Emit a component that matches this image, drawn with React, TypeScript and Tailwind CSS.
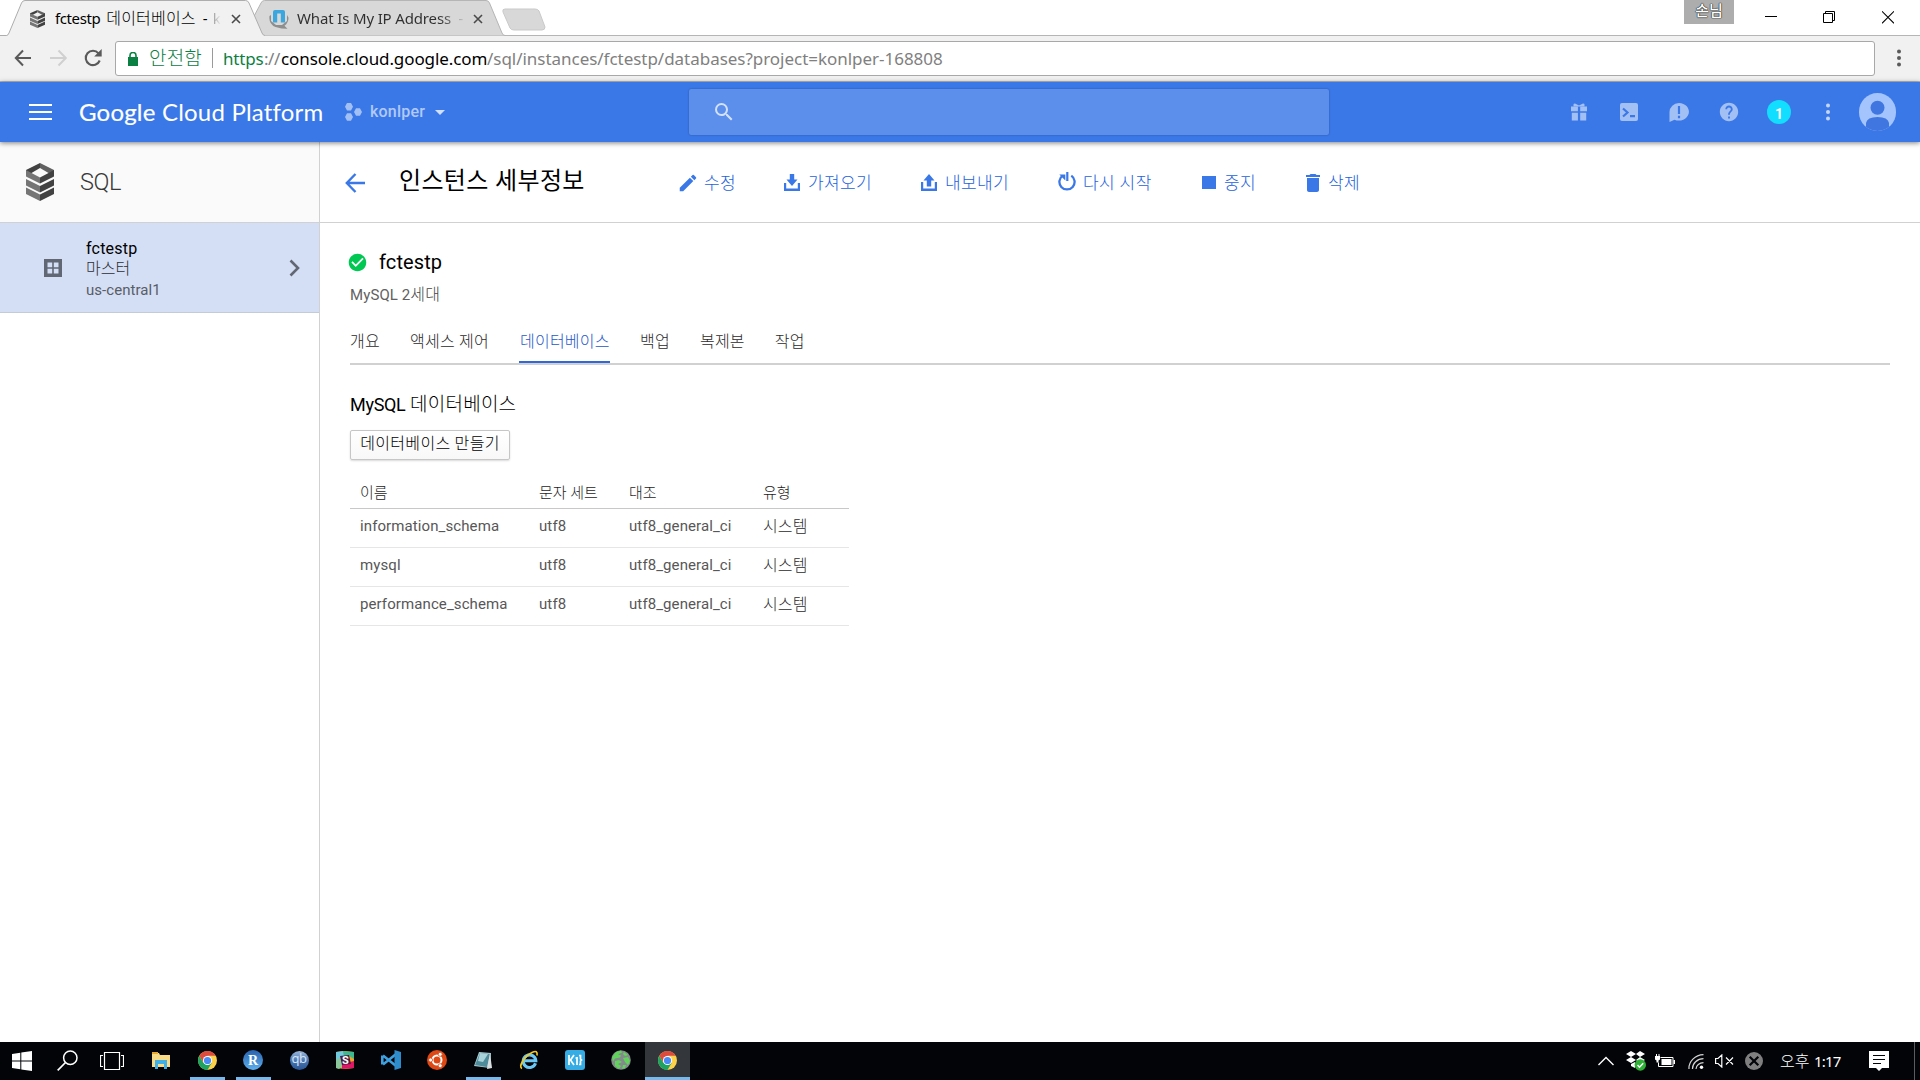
import React from "react";
import {
  MdCheckCircle,
  MdDelete,
  MdEdit,
  MdHelp,
  MdSearch,
} from "react-icons/md";

function SqlLogo({ className }: { className: string }) {
  return (
    <svg viewBox="0 0 28 38" className={className} preserveAspectRatio="none">
      <path d="M14 0 0 7v3l5.5 0L14 5z" fill="#424242" />
      <path d="M14 0l14 7v3h-5.500L14 5z" fill="#616161" />
      <path d="M0 7v6.500l14 7v-6L5.500 10z" fill="#757575" />
      <path d="M28 7v6.500l-14 7v-6l8.500-4.500z" fill="#424242" />
      <path d="M0 16l14 7v6.500L0 22.500z" fill="#757575" />
      <path d="M28 16l-14 7v6.500l14-7z" fill="#424242" />
      <path d="M0 24.500l14 7V38L0 31z" fill="#757575" />
      <path d="M28 24.500l-14 7V38l14-7z" fill="#424242" />
    </svg>
  );
}

function CloseGlyph({ className }: { className: string }) {
  return (
    <svg viewBox="0 0 10 10" className={className}>
      <path d="M1 1l8 8M9 1L1 9" stroke="#4a4a4a" strokeWidth="1.600" />
    </svg>
  );
}

function TabStrip() {
  return (
    <div className="relative flex h-[36px] w-full items-start border-b border-[#b5b5b5] bg-white">
      <div className="relative z-10 -mb-px flex h-[36px] w-[257px] shrink-0 items-center pl-[30px]">
        <svg className="absolute top-0 left-0 -z-10 h-[36px] w-[266px]" viewBox="0 0 266 36">
          <path d="M0 35.500H6.500Q8 35.500 9 33L21.500 3Q22.500.5 25 .5H245.500Q248 .5 249 3L262 33Q263 35.500 265 35.500V36H0z" fill="#f1f1f1" />
          <path d="M0 35.500H6.500Q8 35.500 9 33L21.500 3Q22.500.5 25 .5H245.500Q248 .5 249 3L262 33Q263 35.500 265 35.500" fill="none" stroke="#adadad" />
        </svg>
        <SqlLogo className="mt-[2px] h-[18px] w-[15px]" />
        <div className="ml-[10px] w-[168px] overflow-hidden text-[15px] leading-[38px] whitespace-nowrap text-black">
          <span className="tracking-[-0.4px]">fctestp</span>
          <span className="ml-[6px] text-[16px] font-light tracking-[0.2px]">데이터베이스</span>
          <span className="ml-[7px]">-</span>
          <span className="ml-[5px] bg-gradient-to-r from-[#999] to-[#f1f1f1] bg-clip-text text-transparent">k</span>
        </div>
        <CloseGlyph className="mt-[2px] ml-[8px] h-[10px] w-[10px]" />
      </div>
      <div className="relative flex h-[35px] w-[245px] shrink-0 items-center pl-[12px]">
        <svg className="absolute top-0 left-[-20px] h-[36px] w-[270px]" viewBox="0 0 270 36">
          <path d="M15 36V20L24 3Q25 .5 27.500 .5H249Q251.500 .5 252.500 3L265 33Q266 35.500 268 35.500V36z" fill="#d8d8d8" stroke="#b5b5b5" />
        </svg>
        <svg className="relative mt-[3px] h-[20px] w-[20px]" viewBox="0 0 20 20">
          <path d="M.5 7q-1 8 6 11l6 1.500 6 .2-3-3q4-3 4-8L18 6v6l-5 4H7l-5-4V6z" fill="#8e8e8e" />
          <path d="M4 13.500V3q0-2 2-2h8q2 0 2 2v10.500h-4.200V4.500H8.200v9z" fill="#3ba7de" />
        </svg>
        <div className="relative ml-[8px] w-[167px] overflow-hidden bg-gradient-to-r from-[#2f2f2f] from-85% to-[#c8c8c8] bg-clip-text text-[15px] leading-[38px] tracking-[-0.15px] whitespace-nowrap text-transparent">
          What Is My IP Address&nbsp; -
        </div>
        <CloseGlyph className="relative mt-[2px] ml-[9px] h-[10px] w-[10px]" />
      </div>
      <svg className="mt-[8px] h-[23px] w-[44px] shrink-0" viewBox="0 0 44 23">
        <path d="M3 1h30q3 0 4 2l6 16q0 3-3 3H12q-3 0-4-2L1 4q-1-3 2-3z" fill="#d8d8d8" stroke="#c9c9c9" />
      </svg>
      <div className="ml-auto flex items-start">
        <div className="h-[24px] w-[50px] bg-[#adadad] text-center text-[15px] leading-[20px] font-medium text-white [text-shadow:0_0_1px_#222,0_0_1px_#222,0_0_1px_#222]">
          손님
        </div>
        <svg className="ml-[31px] h-[35px] w-[12px]" viewBox="0 0 12 35">
          <path d="M0 16.500h12" stroke="#000" />
        </svg>
        <svg className="ml-[46px] h-[35px] w-[12px]" viewBox="0 0 12 35">
          <path d="M.5 13.500h9v9h-9zM2.500 13v-1.500h9v9H10" fill="none" stroke="#000" />
        </svg>
        <svg className="mr-[26px] ml-[47px] h-[35px] w-[12px]" viewBox="0 0 12 35">
          <path d="M0 11.300l12 12M12 11.300l-12 12" stroke="#000" strokeWidth="1.100" />
        </svg>
      </div>
    </div>
  );
}

function AddressBar() {
  return (
    <div className="flex h-[46px] w-full items-center border-b border-[#b9b9b9] bg-[#f1f1f1] pb-[1px]">
      <svg className="ml-[14px] h-[18px] w-[18px]" viewBox="0 0 18 18">
        <path d="M17 9H2M9 1.500L1.800 9 9 16.500" fill="none" stroke="#5a5a5a" strokeWidth="2" />
      </svg>
      <svg className="ml-[18px] h-[18px] w-[18px]" viewBox="0 0 18 18">
        <path d="M0 9h15.500M8.500 1.500L15.800 9l-7.300 7.500" fill="none" stroke="#d0d0d0" strokeWidth="2" />
      </svg>
      <svg className="ml-[16px] h-[18px] w-[18px]" viewBox="0 0 18 18">
        <path d="M15.700 11.500A7.200 7.200 0 1 1 14.500 4.300" fill="none" stroke="#5a5a5a" strokeWidth="2.100" />
        <path d="M17.700 0v7.500H10.200z" fill="#5a5a5a" />
      </svg>
      <div className="ml-[13px] flex h-[35px] w-[1760px] items-center rounded-[3px] border border-[#a8a8a8] bg-white text-[17px] leading-[33px] whitespace-nowrap">
        <svg className="mt-[2px] ml-[12px] h-[14px] w-[10px]" viewBox="0 0 10 14">
          <path d="M0 5h10v9H0z" fill="#0b8043" />
          <path d="M2 6V3.500a3 3 0 0 1 6 0V6" fill="none" stroke="#0b8043" strokeWidth="1.600" />
        </svg>
        <span className="ml-[11px] w-[54px] text-[19px] font-light tracking-[0.2px] text-[#0b8043]">안전함</span>
        <span className="ml-[9px] h-[20px] w-px bg-[#9a9a9a]" />
        <span className="ml-[10px] w-[41px] pt-[1px] tracking-[-0.2px] text-[#0b8043]">https</span>
        <span className="w-[17px] pt-[1px] tracking-[-0.5px] text-[#808080]">://</span>
        <span className="w-[206px] pt-[1px] tracking-[-0.1px] text-black">console.cloud.google.com</span>
        <span className="pt-[1px] tracking-[-0.03px] text-[#808080]">/sql/instances/fctestp/databases?project=konlper-168808</span>
      </div>
      <svg className="ml-[22px] h-[18px] w-[4px]" viewBox="0 0 4 18">
        <g fill="#5a5a5a">
          <circle cx="2" cy="2.500" r="2" />
          <circle cx="2" cy="9" r="2" />
          <circle cx="2" cy="15.500" r="2" />
        </g>
      </svg>
    </div>
  );
}

function PlatformHeader() {
  return (
    <header className="relative z-20 flex h-[60px] w-full items-center bg-[#3b78e7] pl-[29px] shadow-[0_1px_5px_rgba(0,0,0,0.5)]">
      <div className="flex w-[23px] flex-col gap-[5px]">
        <span className="h-[2px] bg-white" />
        <span className="h-[2px] bg-white" />
        <span className="h-[2px] bg-white" />
      </div>
      <div className="ml-[27px] w-[245px] font-['Lato'] text-[24px] leading-[60px] tracking-[0.2px] whitespace-nowrap text-white">
        <span className="[-webkit-text-stroke:0.2px_white]">Google</span> Cloud Platform
      </div>
      <svg className="ml-[21px] h-[18px] w-[17px]" viewBox="0 0 17 18">
        <g fill="#a3c0f5">
          <path d="M2 0h4l2 3.700-2 3.700H2L0 3.700z" />
          <path d="M2 10.300h4l2 3.700-2 3.700H2L0 14z" />
          <path d="M11 5.300h4l2 3.700-2 3.700h-4L9 9z" />
        </g>
      </svg>
      <div className="ml-[8px] w-[56px] text-[16px] leading-[58px] font-medium tracking-[0.2px] text-[#b1c9f8] font-[Roboto]">konlper</div>
      <svg className="mt-[1px] ml-[9px] h-[5px] w-[10px]" viewBox="0 0 10 5">
        <path d="M0 0h10L5 5z" fill="#d0dffb" />
      </svg>
      <div className="ml-[244px] flex h-[46px] w-[640px] items-center rounded-[2px] bg-[#5c8fec] pl-[23px] shadow-[0_0_2px_rgba(0,0,0,0.35)]">
        <MdSearch className="h-[24px] w-[24px] text-[#d3e1fb]" />
      </div>
      <div className="ml-auto flex items-center pr-[24px]">
        <svg className="h-[18px] w-[16px]" viewBox="0 0 16 18">
          <path d="M0 3.500h16v4.800H9.200V3.500H6.900v4.800H0zM.8 9.800h6.100V17.500H.8zM9.200 9.800h6v7.700h-6z" fill="#a3c0f5" />
          <path d="M2.500 1.600q0-1 1.500-1l4 2 4-2q1.500 0 1.500 1V3.500h-11z" fill="#a3c0f5" />
        </svg>
        <svg className="ml-[33px] h-[18px] w-[18px]" viewBox="0 0 18 18">
          <rect width="18" height="18" rx="2" fill="#a3c0f5" />
          <path d="M3 5.500l4.500 4-4.500 4M10 13.200h5" fill="none" stroke="#3b78e7" strokeWidth="2.200" />
        </svg>
        <svg className="mt-[1px] ml-[31px] h-[19px] w-[20px]" viewBox="0 0 20 19">
          <path d="M10 0a10 8.800 0 1 1-4.500 16.700L.5 19V9A9.500 9 0 0 1 10 0z" fill="#a3c0f5" />
          <path d="M10 3v8M10 12.800v2.400" stroke="#3b78e7" strokeWidth="2.200" />
        </svg>
        <MdHelp className="ml-[29px] h-[22px] w-[22px] text-[#a3c0f5]" />
        <div className="ml-[27px] flex h-[24px] w-[24px] items-center justify-center rounded-full bg-[#12deff] pt-[3px] text-[14px] leading-none font-bold text-white font-[Roboto]">
          1
        </div>
        <svg className="ml-[35px] h-[18px] w-[4px]" viewBox="0 0 4 18">
          <g fill="#c4d7fa">
            <circle cx="2" cy="2.500" r="2" />
            <circle cx="2" cy="9" r="2" />
            <circle cx="2" cy="15.500" r="2" />
          </g>
        </svg>
        <svg className="ml-[29px] h-[38px] w-[37px] rounded-full" viewBox="0 0 37 38">
          <rect width="37" height="38" fill="#a3c4fd" />
          <circle cx="18.500" cy="14.700" r="7" fill="#4076e0" />
          <path d="M7 38v-8q1-6 11.500-6T30 30v8z" fill="#4076e0" />
        </svg>
      </div>
    </header>
  );
}

function Sidebar() {
  return (
    <aside className="flex w-[320px] shrink-0 flex-col border-r border-[#d1d1d1] bg-white">
      <div className="flex h-[81px] items-center border-b border-[#d1d1d1] bg-[#fafafa] pl-[26px]">
        <SqlLogo className="h-[38px] w-[28px]" />
        <span className="ml-[26px] text-[23.500px] leading-[80px] font-light tracking-[-0.4px] text-[#383838]">SQL</span>
      </div>
      <div className="flex h-[90px] items-center border-b border-[#c3cbd9] bg-[#d4dff5] pl-[44px]">
        <svg className="h-[18px] w-[18px]" viewBox="0 0 18 18">
          <path d="M0 0h18v18H0z" fill="#616773" />
          <path d="M3.500 3.500h4.700v4.700H3.500zM9.800 3.500h4.700v4.700H9.800zM3.500 9.800h4.700v4.700H3.500zM9.800 9.800h4.700v4.700H9.800z" fill="#d4dff5" />
        </svg>
        <div className="ml-[24px] w-[180px] pt-[4px] whitespace-nowrap">
          <div className="text-[16px] leading-[20px] tracking-[0.2px] text-black">fctestp</div>
          <div className="text-[16px] leading-[19px] font-light text-[#2b2e34]">마스터</div>
          <div className="mt-[1px] text-[15px] leading-[22px] tracking-[0.05px] text-[#595d66]">us-central1</div>
        </div>
        <svg className="ml-[23px] h-[18px] w-[11px]" viewBox="0 0 11 18">
          <path d="M1.500 1.500L9 9l-7.500 7.500" fill="none" stroke="#616773" strokeWidth="2.600" />
        </svg>
      </div>
    </aside>
  );
}

function ImportIcon() {
  return (
    <svg className="h-[17px] w-[16px]" viewBox="0 0 16 17">
      <path d="M0 9h2.200v5.500h11.600V9H16v8H0z" fill="#3b78e7" />
      <path d="M5.800 0h4.400v5.500H13.500L8 12 2.500 5.500h3.300z" fill="#3b78e7" />
    </svg>
  );
}

function ExportIcon() {
  return (
    <svg className="h-[17px] w-[16px]" viewBox="0 0 16 17">
      <path d="M0 8h2.200v6.500h11.600V8H16v9H0z" fill="#3b78e7" />
      <path d="M5.800 12.500h4.400V6.500H13.500L8 0 2.500 6.500h3.300z" fill="#3b78e7" />
    </svg>
  );
}

function RestartIcon() {
  return (
    <svg className="mb-[2px] h-[19px] w-[18px]" viewBox="0 0 18 19">
      <path d="M13.300 3.600A7.600 7.600 0 1 1 4.700 3.600" fill="none" stroke="#3b78e7" strokeWidth="2.300" />
      <path d="M9.300 0v9" stroke="#3b78e7" strokeWidth="2.200" />
      <path d="M1.300 2.500h6v6z" fill="#3b78e7" />
    </svg>
  );
}

const actions = [
  { label: "수정", box: "w-[105px]", slot: "w-[25px]", icon: <MdEdit className="-ml-[2px] h-[22px] w-[22px]" /> },
  { label: "가져오기", box: "w-[137px]", slot: "w-[24px]", icon: <ImportIcon /> },
  { label: "내보내기", box: "w-[137px]", slot: "w-[24px]", icon: <ExportIcon /> },
  { label: "다시 시작", box: "w-[144px]", slot: "w-[25px]", icon: <RestartIcon /> },
  { label: "중지", box: "w-[104px]", slot: "w-[22px]", icon: <span className="block h-[13px] w-[14px] bg-[#3b78e7]" /> },
  { label: "삭제", box: "w-[70px]", slot: "w-[22px]", icon: <MdDelete className="-ml-[5px] h-[24px] w-[24px]" /> },
];

function Toolbar() {
  return (
    <div className="flex h-[81px] items-center border-b border-[#d1d1d1] pt-[1px] pl-[25px]">
      <svg className="h-[20px] w-[20px]" viewBox="0 0 20 20">
        <path d="M20 10H2M10.500 1L1.800 10l8.700 9" fill="none" stroke="#3b78e7" strokeWidth="2.400" />
      </svg>
      <h1 className="ml-[34px] w-[280px] pb-[3px] text-[24px] leading-[76px] tracking-[0.35px] whitespace-nowrap text-black">인스턴스 세부정보</h1>
      {actions.map((a) => (
        <button key={a.label} className={`flex items-center text-[#3b78e7] ${a.box}`}>
          <span className={`flex shrink-0 ${a.slot}`}>{a.icon}</span>
          <span className="text-[17px] leading-[24px] font-light tracking-[0.4px] whitespace-nowrap text-[#2362dc]">{a.label}</span>
        </button>
      ))}
    </div>
  );
}

const tabs = ["개요", "액세스 제어", "데이터베이스", "백업", "복제본", "작업"];

const rows = ["information_schema", "mysql", "performance_schema"];

function Content() {
  return (
    <div className="pr-[30px] pl-[30px]">
      <div className="mt-[25px] flex h-[28px] items-center">
        <MdCheckCircle className="-ml-[3px] h-[21px] w-[21px] text-[#00c853]" />
        <h2 className="ml-[11px] text-[20px] leading-[28px] tracking-[0.1px] text-black">fctestp</h2>
      </div>
      <div className="mt-[8px] text-[15px] leading-[22px] tracking-[0.1px] text-[#616161]">
        MySQL 2<span className="text-[16px] font-light text-[#444]">세대</span>
      </div>
      <nav className="mt-[23px] flex h-[36px] gap-[30px] border-b-2 border-[#d1d1d1] text-[16px] leading-[26px] font-light tracking-[0.25px] whitespace-nowrap">
        {tabs.map((t) =>
          t === "데이터베이스" ? (
            <span key={t} className="h-[34px] w-[91px] border-b-2 border-[#3367d6] pl-px text-[#2457cc]">
              {t}
            </span>
          ) : (
            <span key={t} className="text-[#2b2b2b]">
              {t}
            </span>
          ),
        )}
      </nav>
      <h3 className="mt-[26px] text-[18px] leading-[28px] text-black">
        <span className="tracking-[-0.3px]">MySQL</span> <span className="text-[19px] font-light tracking-[0.25px]">데이터베이스</span>
      </h3>
      <button className="mt-[11px] flex h-[30px] w-[160px] justify-center rounded-[2px] border border-[#c6c6c6] bg-gradient-to-b from-white to-[#f8f8f8] text-[16px] leading-[25px] font-light tracking-[0.3px] whitespace-nowrap text-black shadow-[0_1px_2px_rgba(0,0,0,0.15)]">
        데이터베이스 만들기
      </button>
      <table className="mt-[19px] w-[499px] table-fixed border-collapse text-left text-[15px] text-[#575757]">
        <colgroup>
          <col className="w-[179px]" />
          <col className="w-[90px]" />
          <col className="w-[134px]" />
          <col className="w-[96px]" />
        </colgroup>
        <thead>
          <tr className="h-[29px] border-b border-[#c8c8c8] leading-[28px]">
            {["이름", "문자 세트", "대조", "유형"].map((h) => (
              <th key={h} className="p-0 pl-[10px] font-light text-[#1c1c1c]">
                {h}
              </th>
            ))}
          </tr>
        </thead>
        <tbody>
          {rows.map((r) => (
            <tr key={r} className="h-[39px] border-b border-[#e6e6e6] leading-[35px] tracking-[0.1px]">
              <td className="p-0 pb-[2px] pl-[10px]">{r}</td>
              <td className="p-0 pb-[2px] pl-[10px]">utf8</td>
              <td className="p-0 pb-[2px] pl-[10px]">utf8_general_ci</td>
              <td className="p-0 pb-[3px] pl-[10px] text-[16px] font-light text-[#2b2b2b]">시스템</td>
            </tr>
          ))}
        </tbody>
      </table>
    </div>
  );
}

function ChromeIcon() {
  return (
    <svg className="h-[19px] w-[19px]" viewBox="0 0 20 20">
      <circle cx="10" cy="10" r="10" fill="#fdd14a" />
      <path d="M1.340 5A10 10 0 0 1 18.660 5H10L5.670 12.500z" fill="#dd4b3e" />
      <path d="M1.340 5A10 10 0 0 0 10 20L14.330 12.500H5.670z" fill="#1da462" />
      <circle cx="10" cy="10" r="4.800" fill="#fff" />
      <circle cx="10" cy="10" r="3.800" fill="#4a8af4" />
    </svg>
  );
}

const apps: { name: string; open?: boolean; icon: React.ReactNode }[] = [
  { name: "chrome", open: true, icon: <ChromeIcon /> },
  {
    name: "r",
    open: true,
    icon: (
      <span className="flex h-[20px] w-[20px] items-center justify-center rounded-full bg-gradient-to-b from-[#2a62ad] to-[#5fb0ee] font-['Liberation_Serif'] text-[14px] font-bold text-white">R</span>
    ),
  },
  {
    name: "qb",
    icon: (
      <span className="flex h-[19px] w-[19px] items-center justify-center rounded-full bg-gradient-to-b from-[#9db8d8] via-[#4a78b5] to-[#2a5593] pb-[3px] text-[13px] tracking-[-0.5px] text-[#d5e2f2]">qb</span>
    ),
  },
  {
    name: "slack",
    icon: (
      <svg className="h-[18px] w-[18px]" viewBox="0 0 18 18">
        <path d="M0 1l9-1 9 1v16l-9 1-9-1z" fill="#e9a820" />
        <path d="M0 1l7-1 2 6-9 3z" fill="#70c9dc" />
        <path d="M7 0l11 1v7l-5-3-5 1z" fill="#3eb890" />
        <path d="M0 9l5-2 3 7-5 4-3-1z" fill="#8ac89b" />
        <path d="M6 13l12-3v7l-12 1z" fill="#e01765" />
        <path d="M4 5l9-1 2 9-9 1z" fill="#4d1b45" />
        <text x="9.500" y="13" textAnchor="middle" fontSize="11" fontWeight="700" fill="#fff" fontFamily="Roboto">S</text>
      </svg>
    ),
  },
  {
    name: "vscode",
    icon: (
      <svg className="h-[20px] w-[20px]" viewBox="0 0 20 20">
        <path d="M2 5.500L14.500 15.500M2 14.500L14.500 4.500M1.300 5.500v9" stroke="#3fa0e0" strokeWidth="2.600" fill="none" />
        <path d="M13.500 0v20L20 18V2z" fill="#2f8ccc" />
      </svg>
    ),
  },
  {
    name: "ubuntu",
    icon: (
      <svg className="h-[20px] w-[20px]" viewBox="0 0 20 20">
        <circle cx="10" cy="10" r="10" fill="#dd4814" />
        <circle cx="10" cy="10" r="4.500" fill="none" stroke="#fff" strokeWidth="2" />
        <g fill="#fff" stroke="#dd4814" strokeWidth=".8">
          <circle cx="3.600" cy="10" r="2" />
          <circle cx="13.200" cy="4.300" r="2" />
          <circle cx="13.200" cy="15.700" r="2" />
        </g>
      </svg>
    ),
  },
  {
    name: "notepad",
    open: true,
    icon: (
      <svg className="h-[19px] w-[20px]" viewBox="0 0 20 19">
        <path d="M6 1l12 1-1 15-16-2z" fill="#a9c9d0" />
        <path d="M7 2l10 1-3 13-12-2z" fill="#4f8c9b" />
        <path d="M7 2l8 1-5 8-5-1z" fill="#a8d3da" />
        <path d="M17 2l2 15-5 1z" fill="#d9dfe0" />
      </svg>
    ),
  },
  {
    name: "ie",
    icon: (
      <svg className="h-[20px] w-[20px]" viewBox="0 0 20 20">
        <path d="M16.500 13.200A6.300 6.300 0 1 1 16.800 10.700H5" fill="none" stroke="#6bc8f5" strokeWidth="3.100" />
        <path d="M3 18.500C-1 17 5 6.500 13 2.500q6-3 5 3" fill="none" stroke="#f3c822" strokeWidth="1.700" />
      </svg>
    ),
  },
  {
    name: "k",
    icon: (
      <svg className="h-[20px] w-[20px]" viewBox="0 0 20 20">
        <rect width="20" height="20" rx="3" fill="#35ade4" />
        <path d="M4 5v10M9 5L5.500 10 9 15M12 7v8M10.500 8h1.500M14 5.500h1.500V9l1 1-1 1v3.500H14" stroke="#fff" strokeWidth="1.700" fill="none" />
      </svg>
    ),
  },
  {
    name: "globe",
    icon: (
      <svg className="h-[20px] w-[20px]" viewBox="0 0 20 20">
        <circle cx="10" cy="10" r="9.800" fill="#85888c" />
        <path d="M5 2l5-1.500 1 2-4 2 3 1-1 2-5 1-2 3-1-4zM13 2l4 3-3 1-2-2zM12 8l5-1 2 4-2 4-3-3zM4 11l4-1 3 2-4 2 3 2-2 3-4-3zM12 15l3 0-1 3-3 1z" fill="#5fd35a" />
      </svg>
    ),
  },
];

function Taskbar() {
  return (
    <footer className="flex h-[38px] w-full shrink-0 items-center bg-[#020408]">
      <svg className="mb-[1px] ml-[12px] h-[20px] w-[20px]" viewBox="0 0 20 20">
        <path d="M0 3l8.300-1.200v7.700H0zM9.300 1.600L20 0v9.500H9.300zM0 10.500h8.300v7.700L0 17zM9.300 10.500H20V20L9.300 18.400z" fill="#fff" />
      </svg>
      <svg className="mb-[1px] ml-[25px] h-[21px] w-[21px]" viewBox="0 0 21 21">
        <circle cx="13.300" cy="7.700" r="6.700" fill="none" stroke="#fff" strokeWidth="1.500" />
        <path d="M8.500 12.500L.7 20.300" stroke="#fff" strokeWidth="1.700" />
      </svg>
      <svg className="mb-[1px] ml-[22px] h-[18px] w-[24px]" viewBox="0 0 24 18">
        <path d="M4.500.5h15v17h-15zM3 3.500H.5v11H3M21 3.500h2.500v11H21" fill="none" stroke="#fff" strokeWidth="1.200" />
      </svg>
      <svg className="mb-[1px] ml-[28px] h-[17px] w-[18px]" viewBox="0 0 18 17">
        <path d="M0 1h7l1 2h10v12H0z" fill="#fbdc86" />
        <path d="M0 0h6v2H0z" fill="#e8a92e" />
        <path d="M3 8h12v9h-3v-5H6v5H3z" fill="#3fb1e8" />
      </svg>
      <div className="ml-[14px] flex h-full">
        {apps.map((a) => (
          <div key={a.name} className="flex h-full w-[46px] justify-center">
            <div className={a.open ? "flex h-full w-[35px] items-center justify-center border-b-[3px] border-[#76b9ed] pt-[1px]" : "flex h-full w-[35px] items-center justify-center pb-[2px]"}>
              {a.icon}
            </div>
          </div>
        ))}
        <div className="ml-px flex h-full w-[45px] items-center justify-center border-b-[3px] border-[#76b9ed] bg-[#33373b] pt-[1px]">
          <ChromeIcon />
        </div>
      </div>
      <div className="ml-auto flex h-full items-center">
        <svg className="h-[10px] w-[16px]" viewBox="0 0 16 10">
          <path d="M.5 9L8 1.500 15.500 9" fill="none" stroke="#fff" strokeWidth="1.400" />
        </svg>
        <svg className="ml-[12px] h-[20px] w-[20px]" viewBox="0 0 20 20">
          <path d="M5 0l5 3-5 3-5-3zM14 0l5 3-5 3-4-3zM5 6l5 3-5 3-5-3zM14 6l5 3-5 3-4-3zM5 13l4-2v6l-4-2z" fill="#fff" />
          <circle cx="14.300" cy="14" r="5.700" fill="#2eb135" />
          <path d="M11.500 14l2 2.200 3.700-4" fill="none" stroke="#fff" strokeWidth="1.500" />
        </svg>
        <svg className="mb-[1px] ml-[9px] h-[14px] w-[20px]" viewBox="0 0 20 14">
          <path d="M5.500 3.500h12.500v9H3.500v-4" fill="none" stroke="#fff" />
          <path d="M6.500 5h10v6h-10zM18.500 6H20v4h-1.500zM0 2h5v3.500l-1.500 1v2h-2v-2L0 5.500zM1 0h1v2H1zM3.500 0h1v2h-1z" fill="#fff" />
        </svg>
        <svg className="ml-[13px] h-[15px] w-[16px]" viewBox="0 0 16 15">
          <path d="M1 15A15 13.500 0 0 1 15.500.7M4.500 15A11 10 0 0 1 15.500 4.700M8 15a7.500 6.500 0 0 1 7.500-6.300" fill="none" stroke="#d5d5d5" strokeWidth="1.200" />
          <circle cx="13.500" cy="13.300" r="1.700" fill="#fff" />
        </svg>
        <svg className="ml-[11px] h-[14px] w-[19px]" viewBox="0 0 19 14">
          <path d="M.6 4.500H3L6.800 1v12L3 9.500H.6zM11 3.500l7 7M18 3.500l-7 7" fill="none" stroke="#fff" strokeWidth="1.200" />
        </svg>
        <svg className="ml-[11px] h-[18px] w-[18px]" viewBox="0 0 18 18">
          <circle cx="9" cy="9" r="9" fill="#7f7f7f" />
          <path d="M4.700 4.700l8.600 8.600M13.300 4.700l-8.600 8.600" stroke="#020408" strokeWidth="2.200" />
        </svg>
        <div className="ml-[17px] flex w-[62px] items-center text-[15px] leading-[36px] whitespace-nowrap text-white">
          <span className="w-[34px] text-[16px] font-light">오후</span>
          <span className="tracking-[-0.8px]">1:17</span>
        </div>
        <svg className="ml-[27px] h-[20px] w-[20px]" viewBox="0 0 20 20">
          <path d="M0 0h20v17h-7l-3 3-3-3H0z" fill="#fff" />
          <path d="M4 4.500h12M4 8.500h12M4 12.500h8" stroke="#020408" strokeWidth="1.200" />
        </svg>
        <span className="ml-[25px] h-full w-px bg-[#5a5c60]" />
        <span className="w-[5px]" />
      </div>
    </footer>
  );
}

export default function App() {
  return (
    <div className="flex h-[1080px] w-[1920px] flex-col overflow-hidden bg-white font-['Noto_Sans','Noto_Sans_CJK_KR',sans-serif]">
      <TabStrip />
      <AddressBar />
      <PlatformHeader />
      <div className="flex min-h-0 flex-1 font-['Roboto','Noto_Sans_CJK_KR',sans-serif]">
        <Sidebar />
        <main className="min-w-0 flex-1">
          <Toolbar />
          <Content />
        </main>
      </div>
      <Taskbar />
    </div>
  );
}
